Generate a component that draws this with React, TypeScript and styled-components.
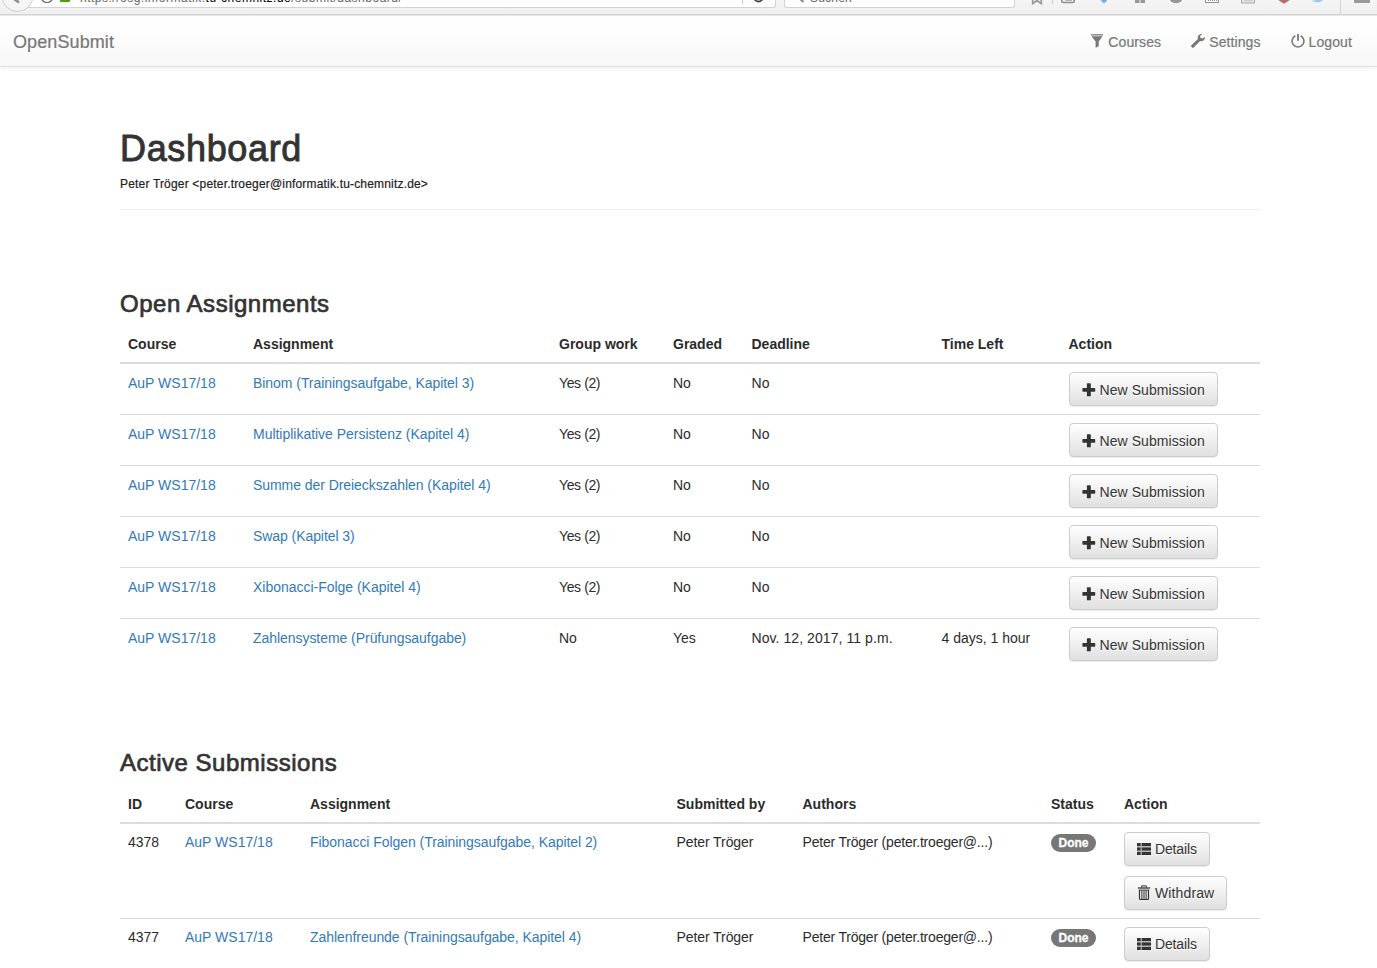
import React from "react";
import styled, { createGlobalStyle } from "styled-components";

const GlobalStyle = createGlobalStyle`
  *, *::before, *::after { box-sizing: border-box; }
  html, body { height: 100%; }
  body {
    margin: 0;
    overflow: hidden;
    background: #fff;
    color: #2b2b2b;
    font-family: "Liberation Sans", Arial, sans-serif;
    font-size: 14px;
    line-height: 20px;
  }
`;

const Toolbar = styled.div`
  position: relative;
  display: flex;
  align-items: flex-start;
  height: 16px;
  overflow: hidden;
  background: linear-gradient(#f5f5f5, #eee);
  border-bottom: 1px solid #e6e6e6;
  box-shadow: inset 0 -1px 0 #d3d3d3;
`;

const AddressBar = styled.div`
  display: flex;
  align-items: flex-start;
  width: 759px;
  height: 8px;
  margin-left: 17px;
  padding-left: 62px;
  background: #fff;
  border: 1px solid #d3d3d3;
  border-top: 0;
  border-radius: 0 0 3px 3px;
`;

const SearchBar = styled(AddressBar)`
  width: 231px;
  margin-left: 8px;
  padding-left: 25px;
`;

const BarText = styled.span<{ $spacing: number }>`
  margin-top: -11px;
  font-size: 12px;
  line-height: 18px;
  color: #666;
  white-space: nowrap;
  letter-spacing: ${(p) => p.$spacing}px;
  b { font-weight: 400; color: #000; }
`;

const ToolbarArt = styled.svg`
  position: absolute;
  left: 0;
  top: 0;
`;

const Navbar = styled.nav`
  display: flex;
  align-items: center;
  justify-content: space-between;
  height: 51px;
  padding: 1px 25px 0 13px;
  background: linear-gradient(#fff, #f8f8f8);
  border-bottom: 1px solid #e3e3e3;
  box-shadow: 0 1px 5px rgba(0, 0, 0, 0.075);
  color: #777;
  -webkit-text-stroke: 0.2px currentColor;
`;

const Brand = styled.a`
  font-size: 18px;
  letter-spacing: 0.1px;
`;

const NavLinks = styled.div`
  display: flex;
  gap: 30px;
`;

const NavLink = styled.a`
  display: flex;
  align-items: center;
  gap: 4px;
  letter-spacing: 0.1px;
  svg { margin-top: -2px; }
`;

const Main = styled.main`
  width: 1140px;
  margin: 0 0 0 120px;
  padding-top: 62px;
`;

const Title = styled.h1`
  margin: 0;
  font-size: 36px;
  line-height: 40px;
  font-weight: 400;
  color: #333;
  letter-spacing: 0.65px;
  -webkit-text-stroke: 0.9px currentColor;
`;

const Subtitle = styled.div`
  margin-top: 5px;
  padding-bottom: 15px;
  height: 36px;
  font-size: 12px;
  color: #222;
  border-bottom: 1px solid #eee;
  letter-spacing: 0.18px;
  -webkit-text-stroke: 0.2px currentColor;
`;

const Section = styled.section<{ $top: number }>`
  margin-top: ${(p) => p.$top}px;
`;

const Heading = styled.h3<{ $gap: number }>`
  margin: 0 0 ${(p) => p.$gap}px;
  font-size: 24px;
  line-height: 26px;
  font-weight: 400;
  color: #333;
  letter-spacing: 0.51px;
  -webkit-text-stroke: 0.7px currentColor;
`;

const Table = styled.table`
  width: 1140px;
  table-layout: fixed;
  border-collapse: separate;
  border-spacing: 0;
`;

const HeadCell = styled.th`
  padding: 8px;
  height: 38px;
  text-align: left;
  border-bottom: 2px solid #ddd;
`;

const Cell = styled.td<{ $drop?: boolean; $spacing?: number }>`
  padding: ${(p) => (p.$drop ? 9 : 8)}px 8px ${(p) => (p.$drop ? 7 : 8)}px;
  vertical-align: top;
  white-space: nowrap;
  letter-spacing: ${(p) => p.$spacing ?? 0}px;
  tr + tr > & { border-top: 1px solid #ddd; }
`;

const Link = styled.a`
  color: #337ab7;
`;

const Button = styled.button<{ $spacing: number; $drop?: boolean }>`
  display: flex;
  align-items: center;
  gap: 4px;
  height: 34px;
  padding: ${(p) => (p.$drop ? "1px 12px 0" : "0 12px 1px")};
  font: inherit;
  letter-spacing: ${(p) => p.$spacing}px;
  color: #333;
  background: linear-gradient(#fff, #e0e0e0);
  border: 1px solid #ccc;
  border-radius: 4px;
  box-shadow: inset 0 1px 0 rgba(255, 255, 255, 0.15), 0 1px 1px rgba(0, 0, 0, 0.075);
  text-shadow: 0 1px 0 #fff;
  svg { flex: none; }
  & + & { margin-top: 10px; }
`;

const Badge = styled.span`
  display: block;
  width: 45px;
  height: 18px;
  margin-top: 2px;
  border-radius: 10px;
  background: #777;
  color: #fff;
  font-size: 12px;
  font-weight: 700;
  line-height: 19px;
  text-align: center;
  -webkit-text-stroke: 0.3px #fff;
`;

const PlusIcon = () => (
  <svg width="14" height="14" viewBox="0 0 14 14" fill="currentColor">
    <path d="M5.5.3h2.700q.6 0 .6.6v4h3.800q.6 0 .6.6v2.600q0 .6-.6.6H8.800v4q0 .6-.6.6H5.500q-.6 0-.6-.6v-4H1q-.6 0-.6-.6V5.500q0-.6.6-.6h3.900v-4q0-.6.6-.6z" />
  </svg>
);

const ListIcon = () => (
  <svg width="14" height="14" viewBox="0 0 14 14" fill="currentColor">
    <rect x="0" y="1" width="14" height="12" opacity=".3" />
    {[1, 5.5, 10].map((y) => (
      <g key={y}>
        <rect x="0" y={y} width="3.6" height="3" rx=".3" />
        <rect x="4.800" y={y} width="9.200" height="3" rx=".3" />
      </g>
    ))}
  </svg>
);

const TrashIcon = () => (
  <svg width="14" height="16" viewBox="0 0 14 16" fill="none" stroke="currentColor">
    <path d="M4.700 2.500V.9h4.600v1.600" />
    <path d="M.9 3h12.200" strokeWidth="1.300" />
    <path d="M2.500 5v8.600q0 .9.9.9h7.200q.9 0 .9-.9V5" strokeWidth="1.200" />
    <path d="M1.900 5.100h10.200M4.900 5.500v8.500M7 5.500v8.500M9.100 5.500v8.500" />
  </svg>
);

const FilterIcon = () => (
  <svg width="14" height="14" viewBox="0 0 14 14" fill="currentColor">
    <path d="M1 .2h12v1.300H1zM1.500 2.300h11L8.700 7.600v4.600l-3.100 1.500V7.600z" />
  </svg>
);

const WrenchIcon = () => (
  <svg width="14" height="14" viewBox="0 0 14 14" fill="currentColor">
    <path d="M11.300.2C9.300-.2 7.200 1 6.800 3.100c-.1.700-.1 1.200.1 1.800L.4 11.200c-.5.500-.5 1 0 1.500l.8.800c.5.500 1 .5 1.500 0L9 7.100c1.800.6 3.700-.2 4.500-1.800.4-.8.500-1.600.4-2.400l-2.500 1.700-2-.8-.4-1.900z" />
  </svg>
);

const PowerIcon = () => (
  <svg width="14" height="14" viewBox="0 0 14 14" fill="none" stroke="currentColor" strokeWidth="1.600">
    <path d="M4.300 1.800a5.900 5.900 0 1 0 5.400 0" />
    <path d="M7 0v6.800" strokeWidth="1.800" />
  </svg>
);

const ToolbarIcons = () => (
  <ToolbarArt width="1377" height="16" viewBox="0 0 1377 16" fill="none">
    <circle cx="17.500" cy="-4" r="15.500" fill="#f5f5f5" stroke="#ccc" />
    <path d="M20-5l-5.500 3.500L20 2.500" transform="translate(-1 0)" stroke="#8c8c8c" strokeWidth="2.600" />
    <circle cx="47" cy="-3.500" r="6" stroke="#666" strokeWidth="1.200" />
    <rect x="60" y="-8" width="10" height="10" rx="1" fill="#4b9e0c" />
    <path d="M742.500 0v4M1052.500 0v4" stroke="#ccc" />
    <circle cx="758.500" cy="-3" r="4.500" stroke="#444" strokeWidth="1.800" />
    <path d="M799-2l4.500 4" stroke="#888" strokeWidth="2" />
    <path d="M1032.700-2v5.500l4.300-3 4.300 3V-2" stroke="#999" strokeWidth="1.700" />
    <rect x="1061.800" y="-9" width="12.400" height="11.500" rx="1.500" stroke="#8f8f8f" strokeWidth="1.600" />
    <path d="M1065.500-2v2.500M1066 .2h6" stroke="#999" strokeWidth="1.300" />
    <path d="M1099.500-1h9l-4.500 4.500z" fill="#6aaeee" />
    <path d="M1135-5h4.500v8h-4.500zM1140.500-5h4.500v8h-4.500z" fill="#969696" />
    <circle cx="1176" cy="-4" r="7.300" fill="#969696" />
    <rect x="1205.500" y="-8" width="13" height="10.500" fill="#fff" stroke="#8f8f8f" />
    <path d="M1208 .5h9" stroke="#888" strokeDasharray="1 1" />
    <rect x="1241.500" y="-8" width="13" height="11" fill="#e6e6e6" stroke="#aaa" />
    <path d="M1244 .8h8.500" stroke="#c2c2c2" />
    <path d="M1278.500-2h11v2.200l-5.500 3.500-5.500-3.500z" fill="#bd6b6b" />
    <path d="M1311.500.5c2.500.3 4-.1 5-1h7c-2 3.200-8 4-12 1z" fill="#9ccbf0" />
    <path d="M1340.500 0v14" stroke="#d2d2d2" />
    <rect x="1354" y="-1" width="16" height="4" rx="1" fill="#999" />
  </ToolbarArt>
);

const OPEN_WIDTHS = [125, 306, 114, 78.5, 190, 127, 199.5];
const OPEN_HEADS = ["Course", "Assignment", "Group work", "Graded", "Deadline", "Time Left", "Action"];
const OPEN_ROWS = [
  { name: "Binom (Trainingsaufgabe, Kapitel 3)", spacing: -0.05, group: "Yes (2)", graded: "No", deadline: "No", left: "" },
  { name: "Multiplikative Persistenz (Kapitel 4)", spacing: -0.02, group: "Yes (2)", graded: "No", deadline: "No", left: "" },
  { name: "Summe der Dreieckszahlen (Kapitel 4)", spacing: -0.06, group: "Yes (2)", graded: "No", deadline: "No", left: "" },
  { name: "Swap (Kapitel 3)", spacing: -0.07, group: "Yes (2)", graded: "No", deadline: "No", left: "" },
  { name: "Xibonacci-Folge (Kapitel 4)", spacing: -0.02, group: "Yes (2)", graded: "No", deadline: "No", left: "" },
  { name: "Zahlensysteme (Prüfungsaufgabe)", spacing: -0.05, group: "No", graded: "Yes", deadline: "Nov. 12, 2017, 11 p.m.", left: "4 days, 1 hour" },
];

const ACTIVE_WIDTHS = [57, 125, 366.5, 126, 248.5, 73, 144];
const ACTIVE_HEADS = ["ID", "Course", "Assignment", "Submitted by", "Authors", "Status", "Action"];
const ACTIVE_ROWS = [
  { id: "4378", name: "Fibonacci Folgen (Trainingsaufgabe, Kapitel 2)", withdraw: true },
  { id: "4377", name: "Zahlenfreunde (Trainingsaufgabe, Kapitel 4)", withdraw: false },
];

const Columns = ({ widths }: { widths: number[] }) => (
  <colgroup>
    {widths.map((w, i) => (
      <col key={i} width={w} />
    ))}
  </colgroup>
);

const TableHead = ({ titles }: { titles: string[] }) => (
  <thead>
    <tr>
      {titles.map((t) => (
        <HeadCell key={t}>{t}</HeadCell>
      ))}
    </tr>
  </thead>
);

export default function App() {
  return (
    <>
      <GlobalStyle />
      <Toolbar>
        <AddressBar>
          <BarText $spacing={0.5}>
            https://osg.informatik.<b>tu-chemnitz.de</b>/submit/dashboard/
          </BarText>
        </AddressBar>
        <SearchBar>
          <BarText $spacing={0.2}>Suchen</BarText>
        </SearchBar>
        <ToolbarIcons />
      </Toolbar>
      <Navbar>
        <Brand>OpenSubmit</Brand>
        <NavLinks>
          <NavLink><FilterIcon />Courses</NavLink>
          <NavLink><WrenchIcon />Settings</NavLink>
          <NavLink><PowerIcon />Logout</NavLink>
        </NavLinks>
      </Navbar>
      <Main>
        <Title>Dashboard</Title>
        <Subtitle>Peter Tröger &lt;peter.troeger@informatik.tu-chemnitz.de&gt;</Subtitle>
        <Section $top={81}>
          <Heading $gap={9}>Open Assignments</Heading>
          <Table>
            <Columns widths={OPEN_WIDTHS} />
            <TableHead titles={OPEN_HEADS} />
            <tbody>
              {OPEN_ROWS.map((r) => (
                <tr key={r.name}>
                  <Cell $drop><Link>AuP WS17/18</Link></Cell>
                  <Cell $drop $spacing={r.spacing}><Link>{r.name}</Link></Cell>
                  <Cell $drop $spacing={r.group === "No" ? 0 : -0.4}>{r.group}</Cell>
                  <Cell $drop>{r.graded}</Cell>
                  <Cell $drop $spacing={0.07}>{r.deadline}</Cell>
                  <Cell $drop>{r.left}</Cell>
                  <Cell><Button $drop $spacing={0.07}><PlusIcon />New Submission</Button></Cell>
                </tr>
              ))}
            </tbody>
          </Table>
        </Section>
        <Section $top={81}>
          <Heading $gap={10}>Active Submissions</Heading>
          <Table>
            <Columns widths={ACTIVE_WIDTHS} />
            <TableHead titles={ACTIVE_HEADS} />
            <tbody>
              {ACTIVE_ROWS.map((r) => (
                <tr key={r.id}>
                  <Cell>{r.id}</Cell>
                  <Cell><Link>AuP WS17/18</Link></Cell>
                  <Cell $spacing={-0.055}><Link>{r.name}</Link></Cell>
                  <Cell $spacing={-0.08}>Peter Tröger</Cell>
                  <Cell $spacing={-0.2}>Peter Tröger (peter.troeger@...)</Cell>
                  <Cell><Badge>Done</Badge></Cell>
                  <Cell>
                    <Button $spacing={-0.14}><ListIcon />Details</Button>
                    {r.withdraw && <Button $spacing={0.12}><TrashIcon />Withdraw</Button>}
                  </Cell>
                </tr>
              ))}
            </tbody>
          </Table>
        </Section>
      </Main>
    </>
  );
}
